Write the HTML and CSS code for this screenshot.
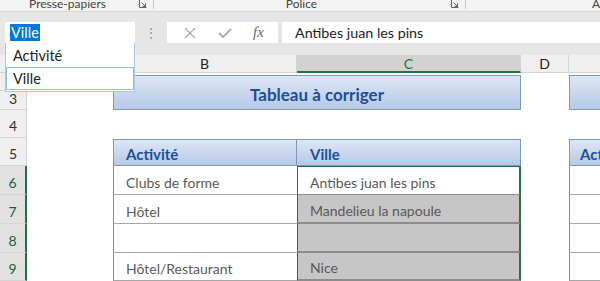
FILE: index.html
```html
<html lang="fr">
<head>
    <title>Tableau à corriger</title>
    <link rel="stylesheet" href="styles.css">
</head>
<body>

<div class="ribbon">
    <div class="group group-clip">
        <span class="group-label">Presse-papiers</span>
        <svg class="launcher" width="8" height="8" viewBox="0 0 8 8">
            <path d="M0.5 0 V7.5 H7.5 M2.5 2.5 L6.5 6.5 M6.5 3.5 V6.5 H3.5" fill="none" stroke="#666" stroke-width="1"/>
        </svg>
    </div>
    <div class="group group-font">
        <span class="group-label">Police</span>
        <svg class="launcher" width="8" height="8" viewBox="0 0 8 8">
            <path d="M0.5 0 V7.5 H7.5 M2.5 2.5 L6.5 6.5 M6.5 3.5 V6.5 H3.5" fill="none" stroke="#666" stroke-width="1"/>
        </svg>
    </div>
    <div class="group group-rest">
        <span class="group-label">A</span>
    </div>
</div>

<div class="formula-bar">
    <div class="name-box"><span class="name-sel">Ville</span></div>
    <div class="grip">⋮</div>
    <div class="fx-buttons">
        <svg width="14" height="14" viewBox="0 0 14 14">
            <path d="M2 2 L12 12 M12 2 L2 12" stroke="#aaa" stroke-width="1.3"/>
        </svg>
        <svg width="16" height="14" viewBox="0 0 16 14">
            <path d="M2 7 L6 11 L14 3" fill="none" stroke="#aaa" stroke-width="1.8"/>
        </svg>
        <span class="fx">fx</span>
    </div>
    <div class="formula-input">Antibes juan les pins</div>
</div>

<div class="sheet">
    <div class="corner"></div>
    <div class="col-head"></div>
    <div class="col-head">B</div>
    <div class="col-head col-active">C</div>
    <div class="col-head">D</div>
    <div class="col-head col-last"></div>

    <div class="row-head r2"></div>
    <div class="row-head r3">3</div>
    <div class="row-head r4">4</div>
    <div class="row-head r5">5</div>
    <div class="row-head r6 row-active">6</div>
    <div class="row-head r7 row-active">7</div>
    <div class="row-head r8 row-active">8</div>
    <div class="row-head r9 row-active">9</div>

    <div class="title-cell">Tableau à corriger</div>
    <div class="title-cell title-e"></div>

    <div class="head-cell hb">Activité</div>
    <div class="head-cell hc">Ville</div>
    <div class="head-cell he">Activité</div>

    <div class="cell cb r6">Clubs de forme</div>
    <div class="cell cb r7">Hôtel</div>
    <div class="cell cb r8"></div>
    <div class="cell cb r9">Hôtel/Restaurant</div>

    <div class="cell cc r6 active">Antibes juan les pins</div>
    <div class="cell cc r7 picked">Mandelieu la napoule</div>
    <div class="cell cc r8 picked"></div>
    <div class="cell cc r9 picked">Nice</div>

    <div class="cell ce r6"></div>
    <div class="cell ce r7"></div>
    <div class="cell ce r8"></div>
    <div class="cell ce r9"></div>
</div>

<div class="name-list">
    <div class="name-item">Activité</div>
    <div class="name-item name-hover">Ville</div>
</div>

</body>
</html>
```

FILE: styles.css
```css
:root {
    --ui-bg: #f3f3f3;
    --bar-bg: #e6e6e6;
    --head-bg: #efefef;
    --line: #d4d4d4;
    --green: #217346;
    --blue-text: #1f4e96;
    --cell-text: #595959;
}

* {
    box-sizing: border-box;
}

html, body {
    margin: 0;
    padding: 0;
    width: 600px;
    height: 281px;
    overflow: hidden;
    background: var(--bar-bg);
    font-family: "Lato", "Open Sans", sans-serif;
    color: #222;
}

.ribbon {
    height: 12px;
    display: flex;
    background: var(--ui-bg);
    border-bottom: 1px solid #d6d6d6;
    overflow: hidden;
}

.group {
    position: relative;
    display: flex;
    align-items: flex-end;
    justify-content: center;
    border-right: 1px solid #c8c8c8;
    height: 9px;
}

.group-label {
    font-size: 12px;
    line-height: 12px;
    color: #444;
    margin-bottom: -1px;
}

.group-clip {
    width: 154px;
    padding-right: 18px;
}

.group-font {
    width: 312px;
    padding-right: 16px;
}

.group-rest {
    flex: 1;
    border-right: none;
    justify-content: flex-end;
    padding-right: 0;
}

.launcher {
    position: absolute;
    right: 6px;
    top: 0;
}

/* name box + formula bar */
.formula-bar {
    height: 43px;
    display: flex;
    align-items: flex-start;
    padding: 10px 0 0 5px;
    background: var(--bar-bg);
}

.name-box {
    width: 130px;
    height: 21px;
    background: #fff;
    padding: 2px 0 0 5px;
}

.name-sel {
    display: inline-block;
    background: #0078d7;
    color: #fff;
    font-size: 14.5px;
    line-height: 17px;
    padding: 0 1px;
}

.grip {
    width: 32px;
    text-align: center;
    color: #9a9a9a;
    font-size: 14px;
    line-height: 21px;
}

.fx-buttons {
    width: 111px;
    height: 21px;
    background: #fff;
    display: flex;
    align-items: center;
    justify-content: space-around;
    padding: 0 4px 0 6px;
}

.fx {
    font-family: "Liberation Serif", serif;
    font-style: italic;
    font-size: 15px;
    color: #666;
}

.formula-input {
    flex: 1;
    height: 21px;
    margin-left: 4px;
    background: #fff;
    font-size: 14.3px;
    line-height: 21px;
    padding-left: 13px;
    color: #222;
}

/* worksheet grid */
.sheet {
    display: grid;
    grid-template-columns: 27px 86px 184px 224px 48px 31px;
    grid-template-rows: 18px 18px 19px 28px 28px 29px 29px 29px 28px;
    background: #fff;
}

.corner {
    background: var(--head-bg);
    border-right: 1px solid var(--line);
    border-bottom: 1px solid var(--line);
}

.col-head {
    background: var(--head-bg);
    border-right: 1px solid var(--line);
    border-bottom: 1px solid var(--line);
    text-align: center;
    font-size: 14px;
    line-height: 18px;
}

.col-active {
    background: #d2d2d2;
    color: var(--green);
    border-bottom: 2px solid var(--green);
}

.col-last {
    border-right: none;
}

.row-head {
    grid-column: 1;
    background: var(--head-bg);
    border-right: 1px solid var(--line);
    border-bottom: 1px solid var(--line);
    display: flex;
    align-items: flex-end;
    justify-content: center;
    padding-bottom: 3px;
    font-size: 14px;
    color: #333;
}

.row-active {
    background: #e1e1e1;
    color: #1e5e38;
    border-right: 2px solid var(--green);
}

.r2 { grid-row: 2; }
.r3 { grid-row: 3; padding-bottom: 2px; }
.r4 { grid-row: 4; }
.r5 { grid-row: 5; }
.r6 { grid-row: 6; }
.r7 { grid-row: 7; }
.r8 { grid-row: 8; }
.r9 { grid-row: 9; }

.title-cell {
    grid-column: 3 / 5;
    grid-row: 2 / 4;
    margin-top: 2px;
    background: linear-gradient(#dde6f4, #b6c9e9);
    border: 1px solid #8097b8;
    color: var(--blue-text);
    font-weight: bold;
    font-size: 17px;
    display: flex;
    align-items: center;
    justify-content: center;
    padding-top: 4px;
}

.title-e {
    grid-column: 6;
    border-right: none;
}

.head-cell {
    grid-row: 5;
    margin-top: 1px;
    background: linear-gradient(#dde6f4, #b6c9e9);
    border: 1px solid #8097b8;
    border-left: none;
    color: var(--blue-text);
    font-weight: bold;
    font-size: 15px;
    display: flex;
    align-items: center;
    padding: 2px 0 0 12px;
    white-space: nowrap;
    overflow: hidden;
}

.hb {
    grid-column: 3;
    border-left: 1px solid #8097b8;
}

.hc {
    grid-column: 4;
    padding-left: 13px;
}

.he {
    grid-column: 6;
    border-left: 1px solid #8097b8;
    border-right: none;
    padding-left: 10px;
}

.cell {
    display: flex;
    align-items: flex-end;
    padding: 0 0 3px 12px;
    font-size: 14px;
    color: var(--cell-text);
    border-bottom: 1px solid #a6a6a6;
}

.cb {
    grid-column: 3;
    border-left: 1px solid #8a8a8a;
}

.cc {
    grid-column: 4;
    border-left: 1px solid var(--green);
    border-right: 2px solid var(--green);
}

.ce {
    grid-column: 6;
    border-left: 1px solid #8a8a8a;
}

.active {
    background: #fff;
    border-top: 1px solid var(--green);
    border-bottom: 1px solid #8c8c8c;
}

.picked {
    background: #c6c6c6;
    border-bottom: 2px solid #8c8c8c;
}

/* name box dropdown, drawn over the grid */
.name-list {
    position: absolute;
    left: 5px;
    top: 43px;
    width: 130px;
    background: #fff;
    border: 1px solid #a9c8e8;
    border-top: none;
    padding: 1px 0 1px 0;
}

.name-item {
    height: 23px;
    font-size: 14.5px;
    line-height: 22px;
    padding-left: 6px;
    border: 1px solid transparent;
}

.name-hover {
    border-color: #91bde8;
}
```
